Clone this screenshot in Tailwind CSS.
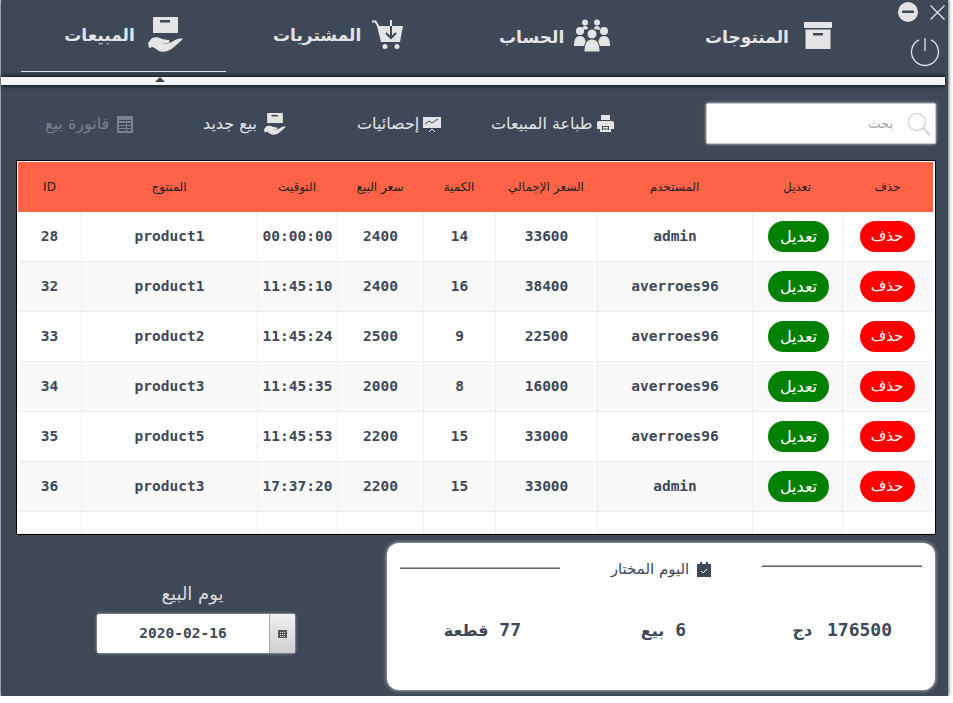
<!DOCTYPE html>
<html lang="ar">
<head>
  <meta charset="UTF-8">
  <title>المبيعات</title>
  <script src="https://cdn.jsdelivr.net/npm/@tailwindcss/browser@4"></script>
</head>
<body class="bg-white font-['DejaVu_Sans',sans-serif] overflow-hidden">
  <div class="relative ml-px w-[947px] h-[696px] bg-[#3e4857] flex flex-col shadow-[0_0_4px_rgba(0,0,0,0.9)]">

    <!-- window buttons -->
    <div class="absolute right-[3px] top-[2px] flex items-center gap-[12px]">
      <svg class="w-[20px] h-[20px]" viewBox="0 0 20 20"><circle cx="10" cy="10" r="10" fill="#e4e4e4"/><rect x="4" y="8.500" width="12" height="2.500" fill="#3e4857"/></svg>
      <svg class="w-[15px] h-[15px]" viewBox="0 0 15 15" fill="none" stroke="#e4e4e4" stroke-width="1.300"><path d="M0.500 0.500l14 14M14.500 0.500l-14 14"/></svg>
    </div>
    <svg class="absolute left-[909px] top-[37px] w-[30px] h-[30px]" viewBox="0 0 30 30" fill="none" stroke="#e4e4e4" stroke-width="1.300"><path d="M9 2.900A13.500 13.500 0 1 0 21 2.900"/><path d="M15 1v13"/></svg>

    <!-- tabs -->
    <div class="h-[77px] flex pl-[20px] text-[17px] font-bold text-[#e4e4e4]">
      <div class="w-[205px] h-[72px] border-b border-[#e4e4e4] flex items-start justify-center gap-[13px] pt-[17px]">
        <span class="leading-[36px]">المبيعات</span>
        <svg class="w-[35px] h-[35px]" viewBox="0 0 35 35" fill="#e4e4e4"><path d="M5 0h25v16H5z"/><rect x="12" y="3" width="10" height="2.500" fill="#3e4857"/><path d="M0 26l4-5c3-1 7-1 10 1l6 1c2 0 2 2 0 3h-6c5 1 9 0 13-3 2-1 6-2 8-1l-9 8c-4 4-11 6-15 4l-6-4-4 1z"/></svg>
      </div>
      <div class="ml-[47px] w-[130px] h-[72px] flex items-start justify-between pt-[20px]">
        <span class="leading-[30px]">المشتريات</span>
        <svg class="w-[31px] h-[29px]" viewBox="0 0 31 29" fill="#e4e4e4"><path d="M0 1.500h3.500l3 5" fill="none" stroke="#e4e4e4" stroke-width="2"/><path d="M5 6h26l-3 16H9z"/><circle cx="13" cy="26.500" r="2.500"/><circle cx="25" cy="26.500" r="2.500"/><path d="M18 0h2v6h-2z"/><path d="M19 6v12M14 13l5 5 5-5" fill="none" stroke="#3e4857" stroke-width="2"/></svg>
      </div>
      <div class="ml-[96px] w-[111px] h-[72px] flex items-start justify-between pt-[19px]">
        <span class="leading-[36px]">الحساب</span>
        <svg class="w-[36px] h-[33px]" viewBox="0 0 36 33" fill="#e4e4e4"><circle cx="11" cy="3.500" r="3"/><circle cx="23" cy="3.500" r="3"/><path d="M8 11c0-3 1-4 3-4s3 1 3 3zM20 10c0-2 1-3 3-3s3 1 3 4z"/><circle cx="6" cy="12" r="4"/><circle cx="30" cy="12" r="4"/><circle cx="18" cy="15" r="4.500"/><path d="M0 27c0-7 2-10 6-10s6 3 6 10zM24 27c0-7 2-10 6-10s6 3 6 10z"/><path d="M10 33c0-9 3-13 8-13s8 4 8 13z" stroke="#3e4857"/></svg>
      </div>
      <div class="ml-[95px] w-[127px] h-[72px] flex items-start justify-between pt-[19px]">
        <span class="leading-[36px]">المنتوجات</span>
        <svg class="w-[28px] h-[27px] mt-[3px]" viewBox="0 0 28 27" fill="#e4e4e4"><rect width="28" height="6" rx="1"/><path d="M1.500 7.500h25V27h-25z"/><rect x="9" y="11" width="10" height="2.500" fill="#3e4857"/></svg>
      </div>
    </div>

    <!-- strip with the tab arrow -->
    <div class="relative w-[944px] h-[8px] bg-[#f4f4f4] shadow-[0_-2px_3px_rgba(0,0,0,0.5),0_2px_3px_rgba(0,0,0,0.5)]">
      <div class="absolute left-[154px] top-0 border-x-[5px] border-x-transparent border-b-[5px] border-b-[#3e4857]"></div>
    </div>

    <!-- toolbar -->
    <div class="h-[75px] flex items-center text-[16px] text-[#e4e4e4] whitespace-nowrap pt-[2px]">
      <div class="ml-[44px] w-[88px] flex items-center justify-between text-[#7b828d]">
        <span>فاتورة بيع</span>
        <svg class="w-[16px] h-[18px]" viewBox="0 0 16 18" fill="#7b828d"><path d="M0 1h16v17H0z"/><path d="M2 5h12v1H2zM2 8h7v2H2zM10 8h4v2h-4zM2 11h7v2H2zM10 11h4v2h-4zM2 14h7v2H2zM10 14h4v2h-4z" fill="#3e4857"/></svg>
      </div>
      <div class="ml-[70px] w-[83px] flex items-center justify-between">
        <span>بيع جديد</span>
        <svg class="w-[22px] h-[22px]" viewBox="0 0 35 35" fill="#e4e4e4"><path d="M5 0h25v16H5z"/><rect x="12" y="3" width="10" height="2.500" fill="#3e4857"/><path d="M0 26l4-5c3-1 7-1 10 1l6 1c2 0 2 2 0 3h-6c5 1 9 0 13-3 2-1 6-2 8-1l-9 8c-4 4-11 6-15 4l-6-4-4 1z"/></svg>
      </div>
      <div class="ml-[71px] w-[84px] flex items-center justify-between">
        <span>إحصائيات</span>
        <svg class="w-[18px] h-[16px]" viewBox="0 0 18 16"><path d="M0 1h18v11H0z" fill="#e4e4e4"/><path d="M2 8l4-3 3 2 6-4" fill="none" stroke="#3e4857"/><path d="M6 16l3-3 3 3" fill="none" stroke="#e4e4e4"/></svg>
      </div>
      <div class="ml-[50px] w-[123px] flex items-center justify-between">
        <span>طباعة المبيعات</span>
        <svg class="w-[17px] h-[17px]" viewBox="0 0 17 17" fill="#e4e4e4"><path d="M4 0h9v5H4z"/><path d="M2 6h13a2 2 0 0 1 2 2v6h-3v3H3v-3H0V8a2 2 0 0 1 2-2z"/><path d="M5 11h7v4H5z" fill="#3e4857"/><path d="M6 12h5v1H6zM6 13.500h5v1H6z" fill="#e4e4e4"/></svg>
      </div>
      <div class="ml-[92px] w-[230px] h-[41px] bg-white rounded-[2px] shadow-[0_0_3px_rgba(255,255,255,0.8)] border border-[#c9c9c9] flex items-center justify-end gap-[14px] pr-[4px]">
        <span class="text-[13px] font-normal text-[#a5a5a5]">بحث</span>
        <svg class="w-[24px] h-[24px]" viewBox="0 0 24 24" fill="none" stroke="#d8d8d8"><circle cx="10" cy="10" r="8.500" stroke-width="1.500"/><path d="M16 16l7 7" stroke-width="2.500"/></svg>
      </div>
    </div>

    <!-- sales table -->
    <div class="ml-[15px] w-[920px] h-[375px] border border-black bg-white p-px overflow-hidden">
      <table class="table-fixed w-[915px] border-separate border-spacing-0 font-['DejaVu_Sans_Mono',monospace] text-[14.500px] font-bold text-[#3e4857] text-center">
        <colgroup>
          <col class="w-[63px]"><col class="w-[176px]"><col class="w-[80px]"><col class="w-[86px]"><col class="w-[72px]"><col class="w-[102px]"><col class="w-[155px]"><col class="w-[90px]"><col class="w-[91px]">
        </colgroup>
        <thead>
          <tr class="h-[50px] bg-[#ff6347] font-['DejaVu_Sans',sans-serif] text-[12px] text-[#222] [&_th]:font-normal">
            <th>ID</th><th>المنتوج</th><th>التوقيت</th><th>سعر البيع</th><th>الكمية</th><th>السعر الإجمالي</th><th>المستخدم</th><th>تعديل</th><th>حذف</th>
          </tr>
        </thead>
        <tbody class="[&_td]:border-l [&_td]:border-b [&_td]:border-[#eeeeee] [&_td:first-child]:border-l-0 [&_td:nth-child(8)]:pl-[2px] [&_td:nth-child(9)]:pr-[2px]">
          <tr class="h-[50px]"><td>28</td><td>product1</td><td>00:00:00</td><td>2400</td><td>14</td><td>33600</td><td>admin</td><td><button class="w-[61px] h-[31px] rounded-full bg-[#008000] text-white font-['DejaVu_Sans',sans-serif] font-normal text-[16px]">تعديل</button></td><td><button class="w-[55px] h-[31px] rounded-full bg-[#ff0000] text-white font-['DejaVu_Sans',sans-serif] font-normal text-[15px]">حذف</button></td></tr>
          <tr class="h-[50px] bg-[#f9f9f9]"><td>32</td><td>product1</td><td>11:45:10</td><td>2400</td><td>16</td><td>38400</td><td>averroes96</td><td><button class="w-[61px] h-[31px] rounded-full bg-[#008000] text-white font-['DejaVu_Sans',sans-serif] font-normal text-[16px]">تعديل</button></td><td><button class="w-[55px] h-[31px] rounded-full bg-[#ff0000] text-white font-['DejaVu_Sans',sans-serif] font-normal text-[15px]">حذف</button></td></tr>
          <tr class="h-[50px]"><td>33</td><td>product2</td><td>11:45:24</td><td>2500</td><td>9</td><td>22500</td><td>averroes96</td><td><button class="w-[61px] h-[31px] rounded-full bg-[#008000] text-white font-['DejaVu_Sans',sans-serif] font-normal text-[16px]">تعديل</button></td><td><button class="w-[55px] h-[31px] rounded-full bg-[#ff0000] text-white font-['DejaVu_Sans',sans-serif] font-normal text-[15px]">حذف</button></td></tr>
          <tr class="h-[50px] bg-[#f9f9f9]"><td>34</td><td>product3</td><td>11:45:35</td><td>2000</td><td>8</td><td>16000</td><td>averroes96</td><td><button class="w-[61px] h-[31px] rounded-full bg-[#008000] text-white font-['DejaVu_Sans',sans-serif] font-normal text-[16px]">تعديل</button></td><td><button class="w-[55px] h-[31px] rounded-full bg-[#ff0000] text-white font-['DejaVu_Sans',sans-serif] font-normal text-[15px]">حذف</button></td></tr>
          <tr class="h-[50px]"><td>35</td><td>product5</td><td>11:45:53</td><td>2200</td><td>15</td><td>33000</td><td>averroes96</td><td><button class="w-[61px] h-[31px] rounded-full bg-[#008000] text-white font-['DejaVu_Sans',sans-serif] font-normal text-[16px]">تعديل</button></td><td><button class="w-[55px] h-[31px] rounded-full bg-[#ff0000] text-white font-['DejaVu_Sans',sans-serif] font-normal text-[15px]">حذف</button></td></tr>
          <tr class="h-[50px] bg-[#f9f9f9]"><td>36</td><td>product3</td><td>17:37:20</td><td>2200</td><td>15</td><td>33000</td><td>admin</td><td><button class="w-[61px] h-[31px] rounded-full bg-[#008000] text-white font-['DejaVu_Sans',sans-serif] font-normal text-[16px]">تعديل</button></td><td><button class="w-[55px] h-[31px] rounded-full bg-[#ff0000] text-white font-['DejaVu_Sans',sans-serif] font-normal text-[15px]">حذف</button></td></tr>
          <tr class="h-[22px]"><td></td><td></td><td></td><td></td><td></td><td></td><td></td><td></td><td></td></tr>
        </tbody>
      </table>
    </div>

    <!-- bottom: date picker and day summary -->
    <div class="flex mt-[8px]">
      <div class="ml-[96px] w-[198px] mt-[39px] flex flex-col items-center">
        <span class="text-[18px] leading-[24px] text-[#dcdcdc] pr-[7px]">يوم البيع</span>
        <div class="mt-[8px] w-full h-[39px] flex bg-white rounded-[2px] shadow-[0_0_3px_rgba(255,255,255,0.8)]">
          <span class="flex-1 flex items-center justify-center text-[14.500px] font-bold text-[#3e4857] font-['DejaVu_Sans_Mono',monospace]">2020-02-16</span>
          <span class="w-[26px] flex items-center justify-center border-l border-[#aaaaaa] bg-gradient-to-b from-[#f0f0f0] to-[#cfcfcf]">
            <svg class="w-[9px] h-[8px]" viewBox="0 0 9 8" fill="#555"><path d="M0 0h9v8H0z"/><path d="M2 2h1v1H2zM4 2h1v1H4zM6 2h1v1H6zM2 4h1v1H2zM4 4h1v1H4zM6 4h1v1H6zM2 6h1v1H2zM4 6h1v1H4zM6 6h1v1H6z" fill="#ddd"/></svg>
          </span>
        </div>
      </div>
      <div class="ml-[92px] w-[548px] h-[147px] bg-white rounded-[12px] shadow-[0_0_4px_rgba(255,255,255,0.8)] flex flex-col">
        <div class="relative h-[50px] flex items-center justify-center gap-[8px] pt-[3px] text-[15px] text-[#3e4857]">
          <div class="absolute left-[13px] top-[24px] w-[160px] h-[2px] bg-gradient-to-b from-[#c9c9c9] to-[#3e4857]"></div>
          <div class="absolute right-[13px] top-[22px] w-[160px] h-[2px] bg-gradient-to-b from-[#c9c9c9] to-[#3e4857]"></div>
          <span>اليوم المختار</span>
          <svg class="w-[14px] h-[15px]" viewBox="0 0 14 15"><path d="M0 2h14v13H0z" fill="#3e4857"/><path d="M3 0h2v3H3zM9 0h2v3H9z" fill="#3e4857"/><path d="M4 9l2 2 4-4" fill="none" stroke="#fff"/></svg>
        </div>
        <div class="grid grid-cols-[134px_165px_206px] mt-[23px] text-[18px] font-bold text-[#3e4857] font-['DejaVu_Sans_Mono',monospace] whitespace-nowrap">
          <span dir="rtl">77 <span class="font-['DejaVu_Sans',sans-serif] text-[16px]">قطعة</span></span>
          <span dir="rtl">6 <span class="font-['DejaVu_Sans',sans-serif] text-[16px]">بيع</span></span>
          <span dir="rtl">176500 <span class="font-['DejaVu_Sans',sans-serif] text-[16px] pr-[4px]">دج</span></span>
        </div>
      </div>
    </div>
  </div>
</body>
</html>
